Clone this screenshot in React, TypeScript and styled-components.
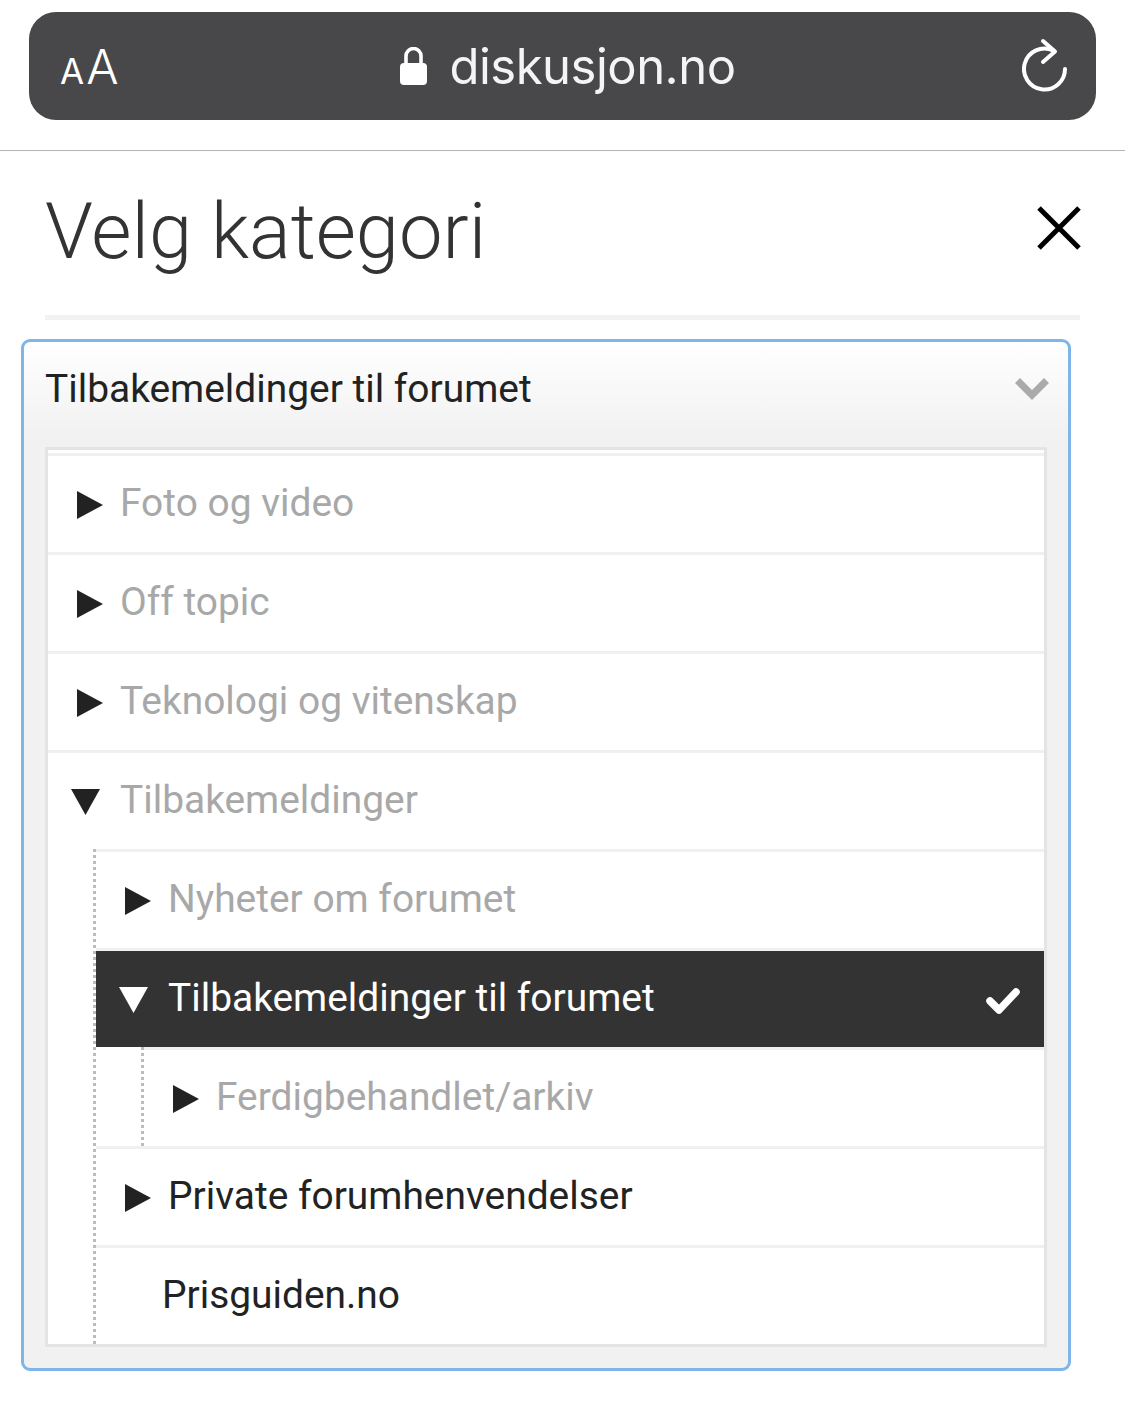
import React from 'react';
import styled, { createGlobalStyle } from 'styled-components';

const GlobalStyle = createGlobalStyle`
  html, body {
    margin: 0;
    background: #fff;
  }
  * {
    box-sizing: border-box;
  }
`;

interface CategoryNode {
  label: string;
  open?: boolean;
  hasChildren?: boolean;
  disabled?: boolean;
  selected?: boolean;
  children?: CategoryNode[];
}

const categories: CategoryNode[] = [
  { label: 'Foto og video', hasChildren: true, disabled: true },
  { label: 'Off topic', hasChildren: true, disabled: true },
  { label: 'Teknologi og vitenskap', hasChildren: true, disabled: true },
  {
    label: 'Tilbakemeldinger',
    hasChildren: true,
    open: true,
    disabled: true,
    children: [
      { label: 'Nyheter om forumet', hasChildren: true, disabled: true },
      {
        label: 'Tilbakemeldinger til forumet',
        hasChildren: true,
        open: true,
        selected: true,
        children: [{ label: 'Ferdigbehandlet/arkiv', hasChildren: true, disabled: true }]
      },
      { label: 'Private forumhenvendelser', hasChildren: true },
      { label: 'Prisguiden.no' }
    ]
  }
];

const Page = styled.div`
  width: 1125px;
  height: 1403px;
  overflow: hidden;
  font-family: Roboto, "Liberation Sans", sans-serif;
`;

const BrowserChrome = styled.div`
  height: 151px;
  padding: 12px 29px 0;
  border-bottom: 1px solid #b4b4b4;
`;

const AddressBar = styled.div`
  height: 108px;
  padding: 0 28px 0 31px;
  border-radius: 27px;
  background: #48484a;
  color: #fff;
  display: flex;
  align-items: center;
  justify-content: space-between;
`;

const TextSize = styled.div`
  display: flex;
  align-items: baseline;
  gap: 2px;
  width: 58px;
  margin-top: 2px;
  font-family: Inter, sans-serif;
  font-weight: 400;
  line-height: 1;
`;

const SmallA = styled.span`
  font-size: 35px;
`;

const BigA = styled.span`
  font-size: 48px;
  font-weight: 300;
`;

const Site = styled.div`
  display: flex;
  align-items: center;
  gap: 22px;
  margin-left: -4px;
`;

const SiteName = styled.span`
  font-family: Inter, sans-serif;
  font-size: 49px;
  letter-spacing: -0.5px;
  line-height: 1;
  color: #f4f4f5;
`;

const ModalHead = styled.div`
  height: 169px;
  margin: 0 45px;
  border-bottom: 5px solid #f2f2f2;
  display: flex;
  align-items: flex-start;
  justify-content: space-between;
`;

const Title = styled.h1`
  margin: 31px 0 0;
  font-size: 77.7px;
  font-weight: 300;
  line-height: 100px;
  color: #333;
`;

const CloseButton = styled.button`
  width: 44px;
  height: 44px;
  margin: 55px -1px 0 0;
  padding: 0;
  border: 0;
  background: none;
  display: block;
`;

const Select = styled.div`
  width: 1050px;
  height: 1032px;
  margin: 19px 0 0 21px;
  padding: 0 21px 21px;
  border: 3px solid #7fb5e9;
  border-radius: 9px;
  background: linear-gradient(#fff, #f1f1f1 96px);
`;

const SelectHead = styled.div`
  height: 105px;
  display: flex;
  align-items: center;
  justify-content: space-between;
`;

const SelectValue = styled.span`
  font-size: 38.92px;
  line-height: 1;
  color: #222;
  margin-top: -10px;
`;

const Chevron = styled.span`
  display: flex;
  margin: -14px -3px 0 0;
`;

const Tree = styled.div`
  height: 900px;
  border: 3px solid #e4e4e4;
  padding-top: 3px;
  background: #fff;
  overflow: hidden;
`;

const Group = styled.div<{ $nested?: boolean }>`
  ${p => p.$nested && `
    margin-left: 45px;
    border-left: 3px dotted #bcbcbc;
  `}
`;

const Row = styled.div<{ $selected?: boolean }>`
  height: 99px;
  padding: 0 24px 0 29px;
  border-top: 3px solid #f0f0f0;
  background: ${p => (p.$selected ? '#333' : '#fff')};
  display: flex;
  align-items: center;
`;

const CaretSlot = styled.span<{ $open?: boolean }>`
  flex: none;
  width: ${p => (p.$open ? 49 : 43)}px;
  margin-left: ${p => (p.$open ? -6 : 0)}px;
  margin-top: 2px;
  display: flex;
`;

const Label = styled.span<{ $disabled?: boolean; $selected?: boolean; $leaf?: boolean }>`
  flex: 1;
  margin-left: ${p => (p.$leaf ? 37 : 0)}px;
  font-size: 38.92px;
  line-height: 1;
  margin-top: -2px;
  color: ${p => (p.$selected ? '#fff' : p.$disabled ? '#a8a8a8' : '#222')};
`;

const Check = styled.span`
  display: flex;
  margin-top: 4px;
`;

const LockIcon = () => (
  <svg width="27" height="38" viewBox="0 0 27 38">
    <path d="M6 18V9a7.500 7.500 0 0 1 15 0v9" fill="none" stroke="#fff" strokeWidth="3.600" />
    <rect x="0" y="16" width="27" height="22" rx="4" fill="#fff" />
  </svg>
);

const ReloadIcon = () => (
  <svg width="46" height="56" viewBox="0 0 46 56">
    <g fill="none" stroke="#fff" strokeWidth="4" strokeLinecap="round" strokeLinejoin="round">
      <path d="M43 31a20.500 20.500 0 1 1-12-18.600" />
      <path d="M21 3l12 10.500-12 10.500" />
    </g>
  </svg>
);

const CloseIcon = () => (
  <svg width="44" height="44" viewBox="0 0 44 44">
    <path d="M2 2l40 40M42 2L2 42" fill="none" stroke="#000" strokeWidth="5" />
  </svg>
);

const ChevronIcon = () => (
  <svg width="36" height="24" viewBox="0 0 36 24">
    <path d="M3.500 4.500L18 19L32.500 4.500" fill="none" stroke="#aaa" strokeWidth="7" />
  </svg>
);

const CheckIcon = () => (
  <svg width="34" height="28" viewBox="0 0 34 28">
    <path d="M4 14l9 9L30 5" fill="none" stroke="#fff" strokeWidth="7.500" strokeLinecap="round" strokeLinejoin="round" />
  </svg>
);

const Caret = ({ open, color }: { open?: boolean; color: string }) =>
  open ? (
    <svg width="29" height="26" viewBox="0 0 29 26">
      <path d="M0 0H29L14.500 26Z" fill={color} />
    </svg>
  ) : (
    <svg width="26" height="28" viewBox="0 0 26 28">
      <path d="M0 0L26 14L0 28Z" fill={color} />
    </svg>
  );

const CategoryRows = ({ nodes, nested }: { nodes: CategoryNode[]; nested?: boolean }) => (
  <Group $nested={nested}>
    {nodes.map(node => (
      <React.Fragment key={node.label}>
        <Row $selected={node.selected}>
          {node.hasChildren && (
            <CaretSlot $open={node.open}>
              <Caret open={node.open} color={node.selected ? '#fff' : '#222'} />
            </CaretSlot>
          )}
          <Label $disabled={node.disabled} $selected={node.selected} $leaf={!node.hasChildren}>
            {node.label}
          </Label>
          {node.selected && (
            <Check>
              <CheckIcon />
            </Check>
          )}
        </Row>
        {node.children && <CategoryRows nodes={node.children} nested />}
      </React.Fragment>
    ))}
  </Group>
);

export default function App() {
  return (
    <Page>
      <GlobalStyle />
      <BrowserChrome>
        <AddressBar>
          <TextSize>
            <SmallA>A</SmallA>
            <BigA>A</BigA>
          </TextSize>
          <Site>
            <LockIcon />
            <SiteName>diskusjon.no</SiteName>
          </Site>
          <ReloadIcon />
        </AddressBar>
      </BrowserChrome>
      <ModalHead>
        <Title>Velg kategori</Title>
        <CloseButton aria-label="Lukk">
          <CloseIcon />
        </CloseButton>
      </ModalHead>
      <Select>
        <SelectHead>
          <SelectValue>Tilbakemeldinger til forumet</SelectValue>
          <Chevron>
            <ChevronIcon />
          </Chevron>
        </SelectHead>
        <Tree>
          <CategoryRows nodes={categories} />
        </Tree>
      </Select>
    </Page>
  );
}
